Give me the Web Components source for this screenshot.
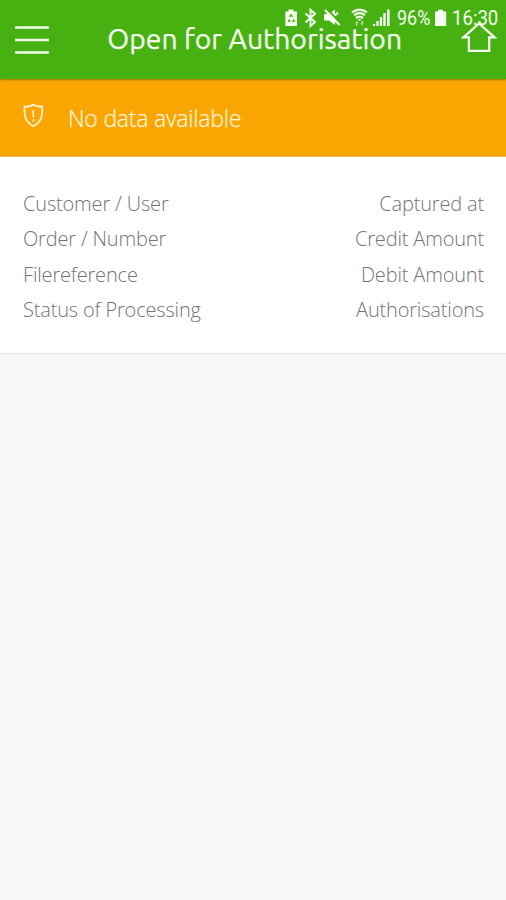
<!DOCTYPE html>
<html lang="en">
<head>
<meta charset="utf-8">
<title>Open for Authorisation</title>
<style>
body { margin: 0; background: #f8f8f8; font-family: "Open Sans", "Noto Sans", sans-serif; }
</style>
</head>
<body>
<app-screen></app-screen>
<script>
const define = (name, html) => customElements.define(name, class extends HTMLElement {
  constructor() {
    super();
    this.attachShadow({ mode: 'open' }).innerHTML = html;
  }
});

define('status-bar', `
<style>
:host { position: absolute; top: 8px; right: 7px; left: 284px; height: 20px; display: flex; align-items: center; color: #f4fff0; font: 400 20px/22px Roboto, sans-serif; z-index: 1; }
svg { display: block; flex: none; }
.t { display: block; white-space: nowrap; transform-origin: left center; transform: scaleX(.93); }
.p { width: 35px; margin-left: 6px; }
.c { width: 47px; margin-left: 4px; }
</style>
<svg width="107" height="20" viewBox="284 8 107 20" fill="currentColor">
  <path fill-rule="evenodd" d="M285.4 11.5h3V9.5h5v2h3.600V26h-11.600zM291 13.500l-2.200 3.300h4.600zM287.300 21.800l2-3 1.500 3zM292 21.800l1.500-3 2 3z"/>
  <path d="M305.500 13.500l9.500 8.500-4.500 4V9.800l4.500 4-9.500 8.700" fill="none" stroke="currentColor" stroke-width="1.900"/>
  <path d="M324 14h5l6-4.500v15.500l-6-4.500h-5z"/>
  <path d="M326.500 8.500l15 15.500" stroke="#47b112" stroke-width="1.800"/>
  <path d="M325 10l14.500 15M335 15.500l3-3" stroke="currentColor" stroke-width="2"/>
  <path d="M352 12.300q7.500-5.500 15 0M354 15.200q5.500-4 11 0M356 18q3.500-2.500 7 0" fill="none" stroke="currentColor" stroke-width="2.200"/>
  <path d="M357.500 19h4l-2 2.200z"/>
  <path d="M355 22.800l1.800-1.800 1.800 1.800h-1v3h-1.600v-3zM360.500 23.500h1v-2.500h1.600v2.500h1l-1.800 2z" opacity=".6"/>
  <path d="M373 26v-2h2.200v2zM376.300 26v-5h2.300v5zM379.800 26v-9h2.300v9zM383.300 26v-13h2.400v13zM387 26V9.500h2.600V26z"/>
</svg>
<span class="p"><span class="t" style="transform:scaleX(.9)">96%</span></span>
<svg width="14" height="18" viewBox="0 0 14 18" style="margin-left:2px"><path d="M1 2.500h3V.7h5v1.800h3.200V17H1z" fill="currentColor"/></svg>
<span class="c"><span class="t">16:30</span></span>
`);

define('menu-button', `
<style>:host, svg { display: block; }</style>
<svg width="34" height="30" viewBox="0 0 34 30"><path d="M0 2.500h34M0 15h34M0 27.500h34" stroke="#eefbe8" stroke-width="2.400"/></svg>`);

define('home-button', `
<style>:host { display: block; } svg { display: block; }</style>
<svg width="36" height="34" viewBox="461 20 36 34" fill="none" stroke="#f4fff0" stroke-width="2.300"><path d="M479 23.500L463.500 37.300H468.900V50.800H489.200V37.300H494.500Z"/></svg>`);

define('app-header', `
<style>
:host { position: relative; display: flex; align-items: center; justify-content: space-between; box-sizing: border-box; height: 79px; padding: 0 9px 0 15px; background: #47b112; box-shadow: 0 1px 2px rgba(90,90,0,.6); }
h1 { margin: -1px 0 0 2.500px; color: #f4fff0; font: 400 28.300px/36px Ubuntu, "Noto Sans", sans-serif; white-space: nowrap; width: 298px; -webkit-text-stroke: .25px currentColor; }
home-button { margin-top: -5px; }
</style>
<menu-button></menu-button>
<h1><slot></slot></h1>
<home-button></home-button>
<status-bar></status-bar>`);

define('notice-bar', `
<style>
:host { display: flex; align-items: center; box-sizing: border-box; height: 78px; padding: 0 23px; background: #f9a602; color: #fff3d8; font-size: 23px; line-height: 32px; font-weight: 300; border-bottom: 1px solid #f1bb5a; }
svg { display: block; margin: -5px 24px 0 0; }
span { white-space: nowrap; letter-spacing: -.22px; -webkit-text-stroke: .25px currentColor; }
</style>
<svg width="21" height="25" viewBox="0 0 21 25" fill="none" stroke="currentColor" stroke-width="1.700"><path d="M10.300 1.500C8 3.500 4.800 3.600 1.500 3.600V9C1.500 16 5 20.500 10.300 23.200C15.600 20.500 19.200 16 19.200 9V3.600C15.900 3.600 12.700 3.500 10.300 1.500Z"/><path d="M10.300 7v7.500M10.300 16.300v2.200"/></svg>
<span><slot></slot></span>`);

define('data-row', `
<style>
:host { display: flex; justify-content: space-between; height: 35.500px; line-height: 35.500px; }
</style><slot name="start"></slot><slot name="end"></slot>`);

define('data-card', `
<style>
:host { display: block; box-sizing: border-box; height: 198px; padding: 28.700px 22px 0 23px; background: #fff; border-bottom: 2px solid #ededed; color: #747474; font-size: 20px; letter-spacing: -.17px; font-weight: 300; }
</style><slot></slot>`);

define('app-screen', `
<style>:host { display: block; height: 900px; background: #f8f8f8; overflow: hidden; }</style>
<app-header>Open for Authorisation</app-header>
<notice-bar>No data available</notice-bar>
<data-card>
  <data-row><span slot="start">Customer / User</span><span slot="end">Captured at</span></data-row>
  <data-row><span slot="start">Order / Number</span><span slot="end">Credit Amount</span></data-row>
  <data-row><span slot="start">Filereference</span><span slot="end">Debit Amount</span></data-row>
  <data-row><span slot="start">Status of Processing</span><span slot="end">Authorisations</span></data-row>
</data-card>`);
</script>
</body>
</html>
